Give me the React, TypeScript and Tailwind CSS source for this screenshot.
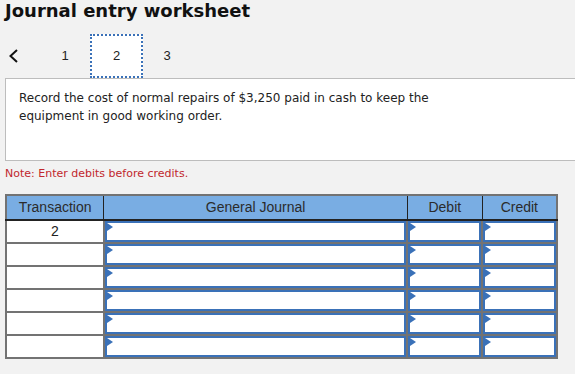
import React from "react";

const rows = [0, 1, 2, 3, 4, 5];

function InputCell() {
  return (
    <td className="p-0 border-2 border-[#737373] h-[23px] align-top">
      <div className="relative h-[21px] border-2 border-[#3a71b8] bg-white">
        <svg className="absolute left-0 top-0" width="7" height="9" viewBox="0 0 7 9">
          <polygon points="0,0 6,4 0,8" fill="#3a71b8" />
        </svg>
      </div>
    </td>
  );
}

export default function App() {
  return (
    <div className="w-[575px] h-[374px] bg-[#f2f2f2] overflow-hidden relative" style={{ fontFamily: "'DejaVu Sans', Verdana, sans-serif" }}>
      <h1 className="pl-[5px] pt-[1px] text-[18px] font-bold leading-[20px] text-[#111]">Journal entry worksheet</h1>
      <div className="flex items-center h-[44px] mt-[13px] text-[13px] text-[#222]" style={{ fontFamily: "'Liberation Sans', Arial, sans-serif" }}>
        <div className="w-[25px] flex justify-start pl-[8px]">
          <svg width="11" height="14" viewBox="0 0 11 14">
            <polyline points="9,1 2.5,7 9,13" fill="none" stroke="#111" strokeWidth="2" />
          </svg>
        </div>
        <div className="w-[65px] text-center pl-[15px]">1</div>
        <div className="w-[53px] h-[44px] border-2 border-dotted border-[#3a71b8] bg-white flex items-center justify-center relative z-10">2</div>
        <div className="w-[48px] text-center">3</div>
      </div>
      <div className="ml-[5px] border border-[#bdbdbd] bg-white h-[83px] w-[580px] pl-[13px] pt-[10px] text-[12px] leading-[18px] text-[#222]">
        Record the cost of normal repairs of $3,250 paid in cash to keep the
        <br />
        equipment in good working order.
      </div>
      <div className="pl-[5px] mt-[6px] text-[11px] leading-[14px] text-[#c1272d]">Note: Enter debits before credits.</div>
      <table className="ml-[5px] mt-[13px] border-collapse border-2 border-[#737373] text-[14px]" style={{ fontFamily: "'Liberation Sans', Arial, sans-serif", width: 553 }}>
        <colgroup>
          <col style={{ width: 98 }} />
          <col style={{ width: 305 }} />
          <col style={{ width: 75 }} />
          <col style={{ width: 75 }} />
        </colgroup>
        <thead>
          <tr className="bg-[#79ade3] h-[25px] text-[#2b2b2b]">
            <th className="font-normal border border-[#222] border-b-2 border-t-0 border-l-0">Transaction</th>
            <th className="font-normal border border-[#222] border-b-2 border-t-0">General Journal</th>
            <th className="font-normal border border-[#222] border-b-2 border-t-0">Debit</th>
            <th className="font-normal border border-[#222] border-b-2 border-t-0 border-r-0">Credit</th>
          </tr>
        </thead>
        <tbody>
          {rows.map((i) => (
            <tr key={i} className="h-[23px]">
              <td className="p-0 border-2 border-[#737373] bg-white text-center text-[#222] align-middle">{i === 0 ? "2" : ""}</td>
              <InputCell />
              <InputCell />
              <InputCell />
            </tr>
          ))}
        </tbody>
      </table>
    </div>
  );
}
